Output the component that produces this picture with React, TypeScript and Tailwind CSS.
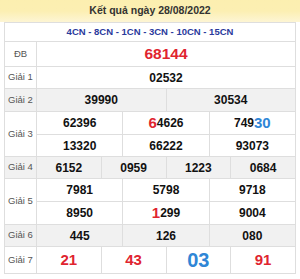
type Part = { text: string; cls?: string };
type Cell = Part[];

const n = (s: string): Cell => [{ text: s }];

function Row({
  label,
  lines,
  bg = "bg-white",
}: {
  label: string;
  lines: { cells: Cell[]; h: string }[];
  bg?: string;
}) {
  return (
    <div className={`flex border-b border-[#dedede] ${bg}`}>
      <div className="w-[32px] shrink-0 flex items-center justify-center border-r border-[#dedede] text-[9.5px] text-[#555]">
        {label}
      </div>
      <div className="flex-1 flex flex-col">
        {lines.map((line, i) => (
          <div
            key={i}
            className={`flex ${line.h} ${i < lines.length - 1 ? "border-b border-[#dedede]" : ""}`}
          >
            {line.cells.map((cell, j) => (
              <div
                key={j}
                className={`flex-1 flex items-center justify-center font-bold text-[12px] text-[#111] ${
                  j < line.cells.length - 1 ? "border-r border-[#dedede]" : ""
                }`}
              >
                {cell.map((p, k) => (
                  <span key={k} className={p.cls}>
                    {p.text}
                  </span>
                ))}
              </div>
            ))}
          </div>
        ))}
      </div>
    </div>
  );
}

const red = "text-[#e0242f]";
const blue = "text-[#2f86d6]";

export default function App() {
  return (
    <div className="w-[300px] h-[279px] bg-white font-['Liberation_Sans',Arial,sans-serif] overflow-hidden">
      {/* tiêu đề */}
      <div className="h-[22px] flex items-center justify-center bg-gradient-to-b from-[#fcefb0] via-[#fcefb2] to-[#fdf5d4] text-[10.5px] font-bold text-[#333]">
        Kết quả ngày 28/08/2022
      </div>
      <div className="ml-[4px] w-[292px] border-l border-r border-t border-[#dedede]">
        <div className="h-[19px] flex items-center justify-center border-b border-[#dedede] text-[9.5px] font-bold text-[#2a3a9c]">
          4CN - 8CN - 1CN - 3CN - 10CN - 15CN
        </div>
        <Row
          label="ĐB"
          lines={[{ cells: [[{ text: "68144", cls: `${red} text-[15.5px]` }]], h: "h-[24px]" }]}
        />
        <Row label="Giải 1" lines={[{ cells: [n("02532")], h: "h-[21px]" }]} />
        <Row
          label="Giải 2"
          bg="bg-[#f1f1f1]"
          lines={[{ cells: [n("39990"), n("30534")], h: "h-[22px]" }]}
        />
        <Row
          label="Giải 3"
          lines={[
            {
              cells: [
                n("62396"),
                [{ text: "6", cls: `${red} text-[15px]` }, { text: "4626" }],
                [{ text: "749" }, { text: "30", cls: `${blue} text-[15px]` }],
              ],
              h: "h-[23px]",
            },
            { cells: [n("13320"), n("66222"), n("93073")], h: "h-[21px]" },
          ]}
        />
        <Row
          label="Giải 4"
          bg="bg-[#f1f1f1]"
          lines={[{ cells: [n("6152"), n("0959"), n("1223"), n("0684")], h: "h-[21px]" }]}
        />
        <Row
          label="Giải 5"
          lines={[
            { cells: [n("7981"), n("5798"), n("9718")], h: "h-[23px]" },
            {
              cells: [
                n("8950"),
                [{ text: "1", cls: `${red} text-[15px]` }, { text: "299" }],
                n("9004"),
              ],
              h: "h-[22px]",
            },
          ]}
        />
        <Row
          label="Giải 6"
          bg="bg-[#f1f1f1]"
          lines={[{ cells: [n("445"), n("126"), n("080")], h: "h-[21px]" }]}
        />
        <Row
          label="Giải 7"
          lines={[
            {
              cells: [
                [{ text: "21", cls: `${red} text-[15px]` }],
                [{ text: "43", cls: `${red} text-[15px]` }],
                [{ text: "03", cls: `${blue} text-[20px]` }],
                [{ text: "91", cls: `${red} text-[15px]` }],
              ],
              h: "h-[26px]",
            },
          ]}
        />
      </div>
    </div>
  );
}
